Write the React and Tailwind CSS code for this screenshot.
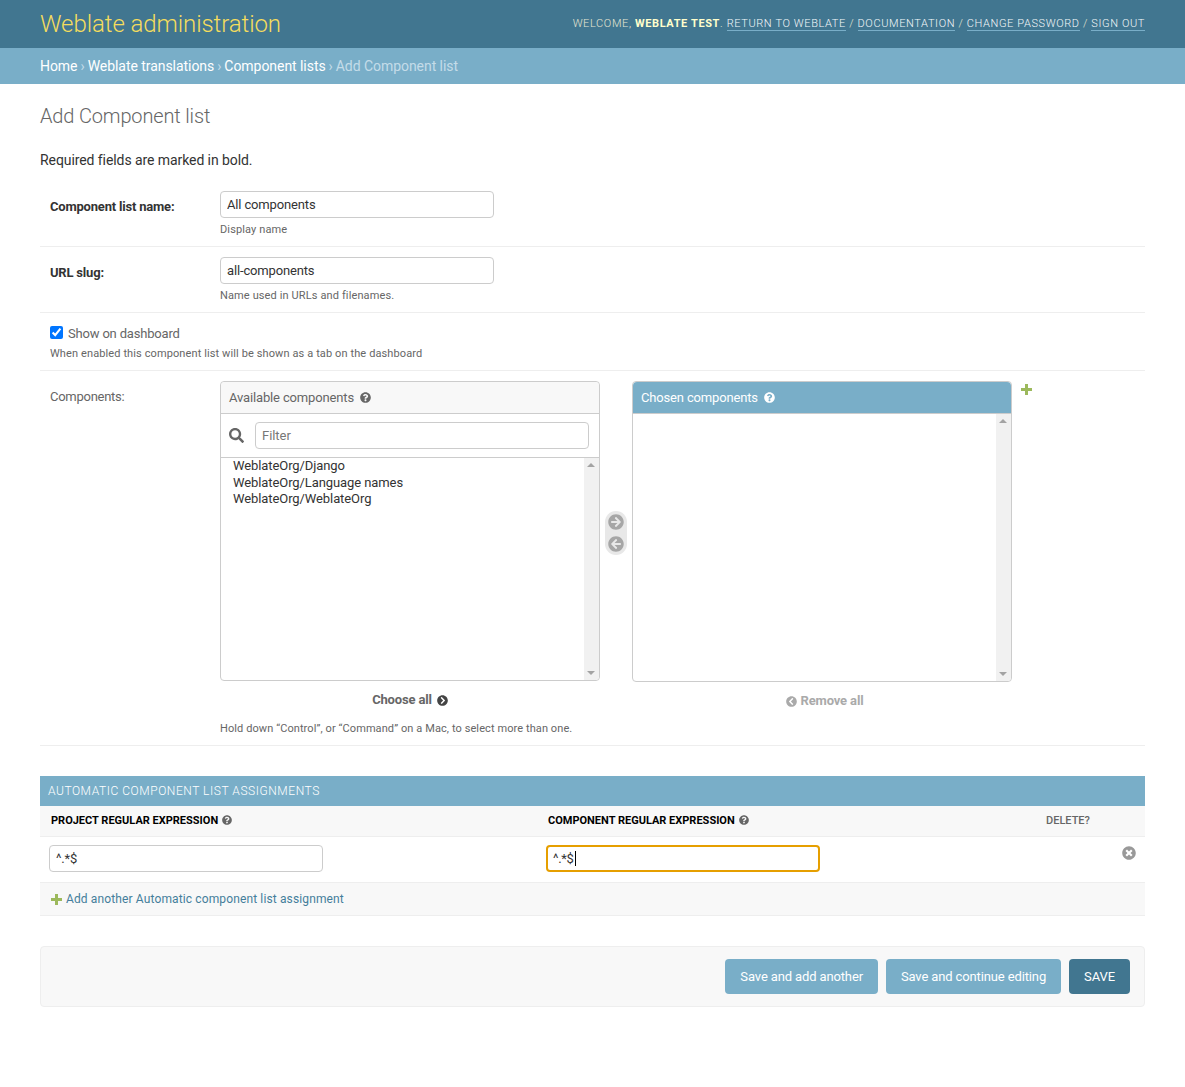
import { FaQuestionCircle, FaSearch, FaArrowCircleRight, FaArrowCircleLeft, FaTimesCircle, FaChevronCircleRight, FaChevronCircleLeft } from "react-icons/fa";

const inputCls = "block w-[274px] h-[27px] rounded border border-[#ccc] bg-white px-[6px] text-[13px] tracking-[-0.15px] text-[#333] outline-none";
const headerLink = "border-b border-[#79aec8] text-[#f4f8fa]";
const saveBtn = "h-[35px] rounded bg-[#79aec8] px-[15px] text-[13px] tracking-[-0.13px] text-white";

function Plus({ className }) {
  return (
    <svg viewBox="0 0 11 11" className={className} fill="currentColor">
      <path d="M4 0h3v4h4v3H7v4H4V7H0V4h4z" />
    </svg>
  );
}

function Scrollbar() {
  return (
    <div className="flex w-[15px] shrink-0 flex-col items-center justify-between bg-[#f1f1f1] py-[5px] pr-px">
      <div className="h-0 w-0 border-x-[4px] border-b-[4px] border-x-transparent border-b-[#a3a3a3]" />
      <div className="h-0 w-0 border-x-[4px] border-t-[4px] border-x-transparent border-t-[#a3a3a3]" />
    </div>
  );
}

function TextRow({ label, value, help }) {
  return (
    <div className="flex h-[66px] border-b border-[#eee] pl-[10px] pt-[10px]">
      <label className="w-[170px] pt-[8px] text-[13px] font-bold leading-[16px] tracking-[-0.2px] text-[#333]">{label}</label>
      <div>
        <input readOnly value={value} className={inputCls} />
        <p className="mt-[5px] text-[11px] leading-[14px] tracking-[0.12px] text-[#666]">{help}</p>
      </div>
    </div>
  );
}

export default function App() {
  return (
    <div className="min-h-[1087px] bg-white font-['Roboto',sans-serif] text-[14px] text-[#333]">
      <header className="flex h-[48px] items-center justify-between bg-[#417690] px-[40px]">
        <h1 className="text-[24px] font-light tracking-[-0.08px] text-[#f5dd5d]">Weblate administration</h1>
        <div className="pt-px text-[11px] font-light uppercase tracking-[0.62px] text-[#e6e6d2]">
          Welcome, <strong className="font-bold text-[#ffc]">Weblate Test</strong>.{" "}
          <a className={headerLink}>Return to Weblate</a> /{" "}
          <a className={headerLink}>Documentation</a> /{" "}
          <a className={headerLink}>Change password</a> /{" "}
          <a className={headerLink}>Sign out</a>
        </div>
      </header>
      <nav className="flex h-[36px] items-center bg-[#79aec8] px-[40px] text-[14px] tracking-[-0.05px] text-[#c4dce8]">
        <a className="text-white">Home</a>
        <span className="mx-[3px]">›</span>
        <a className="text-white">Weblate translations</a>
        <span className="mx-[3px]">›</span>
        <a className="text-white">Component lists</a>
        <span className="mx-[3px]">›</span>
        Add Component list
      </nav>

      <main className="px-[40px] pt-[20px]">
        <h2 className="text-[20px] font-light leading-[24px] tracking-[-0.16px] text-[#666]">Add Component list</h2>
        <p className="mt-[22px] text-[14px] leading-[20px] tracking-[-0.08px] text-[#333]">Required fields are marked in bold.</p>

        <div className="mt-[11px]">
          <TextRow label="Component list name:" value="All components" help="Display name" />
          <TextRow label="URL slug:" value="all-components" help="Name used in URLs and filenames." />

          <div className="h-[58px] border-b border-[#eee] pl-[10px] pt-[13px]">
            <label className="flex h-[16px] items-center text-[13px] tracking-[-0.18px] text-[#666]">
              <input type="checkbox" readOnly checked className="-mt-[4px] mr-[5px] h-[13px] w-[13px] accent-[#0075ff]" />
              Show on dashboard
            </label>
            <p className="mt-[5px] text-[11px] leading-[14px] tracking-[0.11px] text-[#666]">When enabled this component list will be shown as a tab on the dashboard</p>
          </div>

          <div className="flex h-[375px] border-b border-[#eee] pl-[10px] pt-[10px]">
            <label className="w-[170px] pt-[8px] text-[13px] leading-[16px] tracking-[-0.27px] text-[#666]">Components:</label>
            <div>
              <div className="flex items-start">
                <div className="flex h-[300px] w-[380px] flex-col rounded border border-[#ccc]">
                  <div className="flex h-[32px] items-center gap-[6px] rounded-t border-b border-[#ccc] bg-[#f8f8f8] pl-[8px] text-[13px] tracking-[-0.15px] text-[#666]">
                    Available components <FaQuestionCircle className="text-[11px] text-[#666]" />
                  </div>
                  <div className="flex h-[44px] items-center border-b border-[#ccc] pl-[8px] pr-[10px]">
                    <FaSearch className="mr-[11px] text-[15px] text-[#666]" />
                    <input readOnly placeholder="Filter" className="h-[27px] flex-1 rounded border border-[#ccc] px-[6px] text-[13px] tracking-[-0.05px] outline-none placeholder:text-[#777]" />
                  </div>
                  <div className="flex flex-1 overflow-hidden rounded-b">
                    <div className="flex-1 pl-[12px] text-[13px] leading-[16.5px] tracking-[-0.09px] text-[#333]">
                      <div>WeblateOrg/Django</div>
                      <div>WeblateOrg/Language names</div>
                      <div>WeblateOrg/WeblateOrg</div>
                    </div>
                    <Scrollbar />
                  </div>
                </div>

                <div className="mx-[5px] mt-[130px] flex h-[44px] w-[22px] flex-col items-center justify-center gap-[6px] rounded-[11px] bg-[#e8e8e8] text-[16px] text-[#a6a6a6]">
                  <FaArrowCircleRight />
                  <FaArrowCircleLeft />
                </div>

                <div className="flex h-[301px] w-[380px] flex-col rounded border border-[#ccc]">
                  <div className="flex h-[32px] items-center gap-[6px] rounded-t border-b border-[#ccc] bg-[#79aec8] pl-[8px] text-[13px] tracking-[-0.16px] text-white">
                    Chosen components <FaQuestionCircle className="text-[11px] text-white" />
                  </div>
                  <div className="flex flex-1 justify-end overflow-hidden rounded-b">
                    <Scrollbar />
                  </div>
                </div>

                <Plus className="ml-[9px] mt-[3px] h-[11px] w-[11px] text-[#9cb95c]" />
              </div>

              <div className="flex items-start">
                <div className="flex w-[380px] items-center justify-center gap-[5px] pt-[10px] text-[13px] font-bold leading-[16px] tracking-[-0.15px] text-[#666]">
                  Choose all <FaChevronCircleRight className="mt-px text-[11px] text-[#444]" />
                </div>
                <div className="ml-[32px] flex w-[385px] items-center justify-center gap-[4px] pt-[11px] text-[13px] font-bold leading-[16px] tracking-[-0.15px] text-[#aaa]">
                  <FaChevronCircleLeft className="mt-px text-[11px] text-[#aaa]" /> Remove all
                </div>
              </div>
              <p className="mt-[13px] text-[11px] leading-[14px] tracking-[0.09px] text-[#666]">Hold down “Control”, or “Command” on a Mac, to select more than one.</p>
            </div>
          </div>
        </div>

        <section className="mt-[30px]">
          <h2 className="flex h-[30px] items-center bg-[#79aec8] pl-[8px] text-[12px] font-light uppercase tracking-[0.55px] text-white">Automatic component list assignments</h2>
          <div className="flex h-[31px] items-center border-b border-[#eee] bg-[#f8f8f8] text-[11px] font-bold uppercase">
            <div className="flex w-[497px] items-center gap-[4px] pl-[11px] text-black">Project regular expression <FaQuestionCircle className="-mt-[2px] text-[10px] text-[#666]" /></div>
            <div className="flex w-[498px] items-center gap-[4px] pl-[11px] text-black">Component regular expression <FaQuestionCircle className="-mt-[2px] text-[10px] text-[#666]" /></div>
            <div className="pl-[11px] font-medium text-[#666]">Delete?</div>
          </div>
          <div className="flex h-[46px] border-b border-[#eee] pt-[8px]">
            <div className="w-[497px] pl-[9px]">
              <input readOnly value="^.*$" className={inputCls} />
            </div>
            <div className="w-[585px] pl-[9px]">
              <div className="flex h-[27px] w-[274px] items-center rounded border-2 border-[#e69f00] bg-white pl-[5px] text-[13px] tracking-[-0.3px] text-[#333]">
                ^.*$<span className="ml-px h-[15px] w-px bg-black" />
              </div>
            </div>
            <FaTimesCircle className="mt-[1px] text-[14px] text-[#999]" />
          </div>
          <div className="flex h-[33px] items-center gap-[4px] border-b border-[#eee] bg-[#f8f8f8] pl-[11px] text-[12px] tracking-[0.13px] text-[#447e9b]">
            <Plus className="h-[11px] w-[11px] text-[#9cb95c]" /> Add another Automatic component list assignment
          </div>
        </section>

        <div className="mt-[30px] flex h-[61px] items-center justify-end gap-[8px] rounded border border-[#eee] bg-[#f8f8f8] pr-[14px]">
          <button className={saveBtn}>Save and add another</button>
          <button className={saveBtn}>Save and continue editing</button>
          <button className="h-[35px] rounded bg-[#417690] px-[15px] text-[13px] uppercase tracking-[-0.1px] text-white">Save</button>
        </div>
      </main>
    </div>
  );
}
